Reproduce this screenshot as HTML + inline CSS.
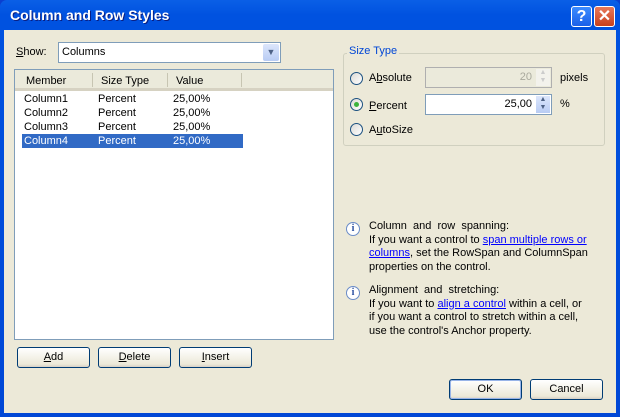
<!DOCTYPE html>
<html><head><style>
*{box-sizing:border-box;margin:0;padding:0}
body{width:620px;height:417px;overflow:hidden;font-family:"Liberation Sans",sans-serif;font-size:11px;color:#000;background:#0a3fd0}
.win{position:absolute;left:0;top:0;width:620px;height:417px;background:linear-gradient(#0a5fe6,#0052e0 15px,#0047d6);border-radius:7px 7px 0 0}
.title{position:absolute;left:10px;top:7px;color:#fff;font-weight:bold;font-size:14px;text-shadow:1px 1px #0a1e80}
.body{position:absolute;left:4px;top:30px;width:612px;height:383px;background:#ece9d8}
.a{position:absolute}
.tb{position:absolute;top:6px;width:21px;height:21px;border:1px solid #fff;border-radius:3px;color:#fff;font-weight:bold;text-align:center;font-size:16px;line-height:19px}
.btn{position:absolute;height:21px;border:1px solid #003c74;border-radius:3px;background:linear-gradient(#fff,#ece9d8 85%,#d6d0c5);text-align:center;line-height:19px}
.radio{position:absolute;width:13px;height:13px;border:1px solid #1c5180;border-radius:50%;background:linear-gradient(135deg,#dcdad5,#fff)}
.info{position:absolute;width:14px;height:14px;border:1px solid #6a8cc8;border-radius:50%;background:#fff;color:#2a4fa0;font-weight:bold;font-size:10px;text-align:center;line-height:12px;font-family:"Liberation Serif",serif}
a{color:#00f;text-decoration:underline}
.row{position:absolute;left:7px;height:14px;line-height:14px;width:221px}
.row span{position:absolute}
</style></head><body>
<div class="win">
<div class="title">Column and Row Styles</div>
<div class="tb" style="left:571px;background:linear-gradient(#3c8cff,#1a5fe8)">?</div>
<div class="tb" style="left:594px;background:linear-gradient(#e8785a,#c8401c)">✕</div>
<div class="body"></div>
</div>
<div class="a" style="left:16px;top:46px"><u>S</u>how:</div>
<div class="a" style="left:58px;top:42px;width:223px;height:21px;border:1px solid #7f9db9;background:#fff;padding:3px 3px">Columns
<div class="a" style="right:1px;top:1px;width:16px;height:17px;background:linear-gradient(#dce6fb,#b8ccf4);border-radius:2px;color:#4d6185;font-size:9px;text-align:center;line-height:17px">▼</div></div>
<div class="a" style="left:14px;top:69px;width:320px;height:271px;border:1px solid #7f9db9;background:#fff">
 <div class="a" style="left:0;top:0;width:318px;height:21px;background:#ebeadb;border-bottom:3px solid #d6d2c2"></div>
 <div class="a" style="left:11px;top:5px">Member</div><div class="a" style="left:77px;top:3px;height:14px;border-left:1px solid #c7c5b2"></div>
 <div class="a" style="left:86px;top:5px">Size Type</div><div class="a" style="left:152px;top:3px;height:14px;border-left:1px solid #c7c5b2"></div>
 <div class="a" style="left:161px;top:5px">Value</div><div class="a" style="left:226px;top:3px;height:14px;border-left:1px solid #c7c5b2"></div>
 <div class="row" style="top:22px"><span style="left:2px">Column1</span><span style="left:76px">Percent</span><span style="left:151px">25,00%</span></div>
 <div class="row" style="top:36px"><span style="left:2px">Column2</span><span style="left:76px">Percent</span><span style="left:151px">25,00%</span></div>
 <div class="row" style="top:50px"><span style="left:2px">Column3</span><span style="left:76px">Percent</span><span style="left:151px">25,00%</span></div>
 <div class="row" style="top:64px;background:#316ac5;color:#fff"><span style="left:2px">Column4</span><span style="left:76px">Percent</span><span style="left:151px">25,00%</span></div>
</div>
<div class="btn" style="left:17px;top:347px;width:73px"><u>A</u>dd</div>
<div class="btn" style="left:98px;top:347px;width:73px"><u>D</u>elete</div>
<div class="btn" style="left:179px;top:347px;width:73px"><u>I</u>nsert</div>
<div class="a" style="left:343px;top:53px;width:262px;height:93px;border:1px solid #d0d0bf;border-radius:3px"></div>
<div class="a" style="left:347px;top:45px;background:#ece9d8;color:#0046d5;padding:0 2px">Size Type</div>
<div class="radio" style="left:350px;top:72px"></div><div class="a" style="left:369px;top:72px">A<u>b</u>solute</div>
<div class="radio" style="left:350px;top:98px"><div class="a" style="left:3px;top:3px;width:5px;height:5px;border-radius:50%;background:#3cb33c"></div></div><div class="a" style="left:369px;top:100px"><u>P</u>ercent</div>
<div class="radio" style="left:350px;top:123px"></div><div class="a" style="left:369px;top:124px">A<u>u</u>toSize</div>
<div class="a" style="left:425px;top:67px;width:127px;height:21px;border:1px solid #afafaf;background:#ebeadb;color:#a9a99d;text-align:right;padding:3px 19px 0 0">20
<div class="a" style="right:1px;top:1px;width:14px;height:17px;background:#f3f2ec;color:#ccc;font-size:7px;line-height:8px;text-align:center">▲<br>▼</div></div>
<div class="a" style="left:560px;top:72px">pixels</div>
<div class="a" style="left:425px;top:94px;width:127px;height:21px;border:1px solid #7f9db9;background:#fff;text-align:right;padding:3px 19px 0 0">25,00
<div class="a" style="right:1px;top:1px;width:14px;height:17px;background:linear-gradient(#dce6fb,#b8ccf4);color:#4d6185;font-size:7px;line-height:8px;text-align:center">▲<br>▼</div></div>
<div class="a" style="left:560px;top:98px">%</div>
<div class="info" style="left:346px;top:222px">i</div>
<div class="a" style="left:369px;top:220px;line-height:13.5px;width:240px">Column&nbsp; and&nbsp; row&nbsp; spanning:<br>If you want a control to <a>span multiple rows or<br>columns</a>, set the RowSpan and ColumnSpan<br>properties on the control.</div>
<div class="info" style="left:346px;top:286px">i</div>
<div class="a" style="left:369px;top:284px;line-height:13.5px;width:240px">Alignment&nbsp; and&nbsp; stretching:<br>If you want to <a>align a control</a> within a cell, or<br>if you want a control to stretch within a cell,<br>use the control's Anchor property.</div>
<div class="btn" style="left:449px;top:379px;width:73px;border-color:#003c74;box-shadow:inset 0 0 0 1px #98b4e8">OK</div>
<div class="btn" style="left:530px;top:379px;width:73px">Cancel</div>
</body></html>
